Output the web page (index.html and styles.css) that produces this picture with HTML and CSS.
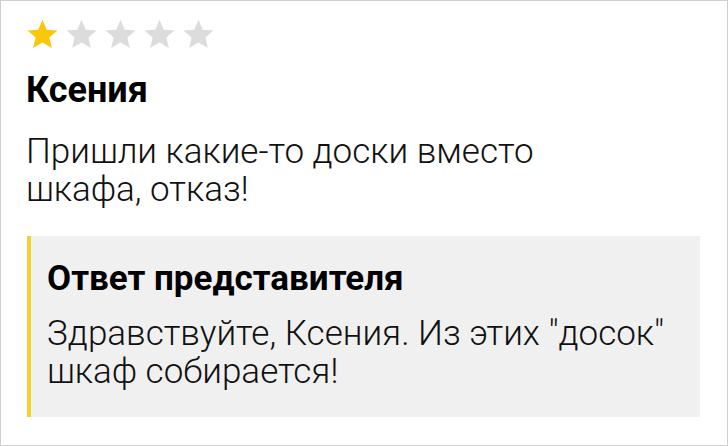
FILE: index.html
```html
<!DOCTYPE html>
<html lang="ru">
<head>
    <meta charset="UTF-8">
    <meta name="viewport" content="width=device-width, initial-scale=1.0">
    <link rel="stylesheet" href="styles.css">
</head>
<body>
    <div class="review">
        <div class="stars">
            <svg class="star on" viewBox="0 0 24 24"><path d="M12 1.3l3.1 7.2 7.8.6-5.9 5.1 1.8 7.6L12 17.8l-6.8 4 1.8-7.6-5.9-5.1 7.8-.6z"/></svg>
            <svg class="star" viewBox="0 0 24 24"><path d="M12 1.3l3.1 7.2 7.8.6-5.9 5.1 1.8 7.6L12 17.8l-6.8 4 1.8-7.6-5.9-5.1 7.8-.6z"/></svg>
            <svg class="star" viewBox="0 0 24 24"><path d="M12 1.3l3.1 7.2 7.8.6-5.9 5.1 1.8 7.6L12 17.8l-6.8 4 1.8-7.6-5.9-5.1 7.8-.6z"/></svg>
            <svg class="star" viewBox="0 0 24 24"><path d="M12 1.3l3.1 7.2 7.8.6-5.9 5.1 1.8 7.6L12 17.8l-6.8 4 1.8-7.6-5.9-5.1 7.8-.6z"/></svg>
            <svg class="star" viewBox="0 0 24 24"><path d="M12 1.3l3.1 7.2 7.8.6-5.9 5.1 1.8 7.6L12 17.8l-6.8 4 1.8-7.6-5.9-5.1 7.8-.6z"/></svg>
        </div>
        <div class="author">Ксения</div>
        <p class="text">Пришли какие-то доски вместо<br>шкафа, отказ!</p>
        <div class="answer">
            <div class="answer-title">Ответ представителя</div>
            <p class="text">Здравствуйте, Ксения. Из этих "досок"<br>шкаф собирается!</p>
        </div>
    </div>
</body>
</html>
```

FILE: styles.css
```css
html, body {
    margin: 0;
    height: 100%;
    background: #fff;
}

.review {
    box-sizing: border-box;
    width: 728px;
    height: 446px;
    border: 1px solid #cfcfcf;
    padding: 17px 27px 0 25px;
    font-family: Roboto, "Noto Sans", sans-serif;
    color: #000;
}

.stars {
    display: flex;
    gap: 6px;
    height: 33px;
}

.star {
    width: 33px;
    height: 33px;
    fill: #dcdcdc;
}

.star.on { fill: #fcc60a; }

.author {
    margin-top: 18px;
    font-size: 36px;
    font-weight: 700;
    line-height: 42px;
}

.text {
    margin: 0;
    font-size: 35px;
    font-weight: 300;
    line-height: 38px;
    color: #111;
}

.review > .text { margin-top: 22px; }

.answer {
    margin: 27px 0 0 1px;
    background: #f0f0f0;
    border-left: 4px solid #f4d22b;
    padding: 23px 20px 0 16px;
    height: 181px;
    box-sizing: border-box;
}

.answer-title {
    font-size: 35px;
    font-weight: 700;
    line-height: 40px;
    margin-bottom: 16px;
}
```
